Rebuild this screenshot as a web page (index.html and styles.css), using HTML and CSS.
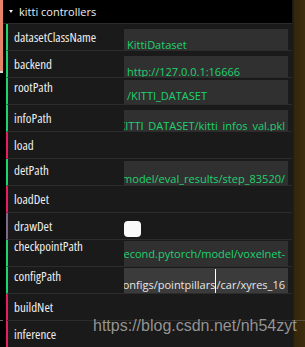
FILE: index.html
```html
<!DOCTYPE html>
<html lang="en">

<head>
    <meta charset="UTF-8">
    <title>kitti controllers</title>
    <link rel="stylesheet" href="styles.css">
</head>

<body>
    <div class="page">
        <div class="gutter-left"></div>
        <div class="gui">
            <div class="title"><span class="arrow"></span>kitti controllers</div>
            <ul class="rows">
                <li class="row string">
                    <span class="label">datasetClassName</span>
                    <div class="field">KittiDataset</div>
                </li>
                <li class="row string">
                    <span class="label">backend</span>
                    <div class="field">http://127.0.0.1:16666</div>
                </li>
                <li class="row string lift-m">
                    <span class="label">rootPath</span>
                    <div class="field">/KITTI_DATASET</div>
                </li>
                <li class="row string">
                    <span class="label">infoPath</span>
                    <div class="field scrolled">/KITTI_DATASET/kitti_infos_val.pkl</div>
                </li>
                <li class="row function">
                    <span class="label">load</span>
                </li>
                <li class="row string lift-s">
                    <span class="label">detPath</span>
                    <div class="field scrolled">/second.pytorch/model/eval_results/step_83520/</div>
                </li>
                <li class="row function">
                    <span class="label">loadDet</span>
                </li>
                <li class="row boolean">
                    <span class="label">drawDet</span>
                    <span class="checkbox"></span>
                </li>
                <li class="row string lift-l">
                    <span class="label">checkpointPath</span>
                    <div class="field scrolled">/second.pytorch/model/voxelnet-</div>
                </li>
                <li class="row string lift-m focused">
                    <span class="label">configPath</span>
                    <div class="field scrolled">/second/configs/pointpillars<span class="caret"></span>/car/xyres_16</div>
                </li>
                <li class="row function">
                    <span class="label">buildNet</span>
                </li>
                <li class="row function">
                    <span class="label">inference</span>
                </li>
            </ul>
        </div>
        <div class="gutter-right"></div>
    </div>
    <div class="watermark">https://blog.csdn.net/nh54zyt</div>
</body></html>
```

FILE: styles.css
```css
* {
    box-sizing: border-box;
    padding: 0;
    margin: 0;
}

body {
    background: #000;
    font-family: "Open Sans", "Noto Sans", sans-serif;
    overflow: hidden;
}

.page {
    display: flex;
    height: 347px;
}

.gutter-left {
    width: 3px;
    background:
        linear-gradient(transparent 320px, #6a6a6a 320px, #6a6a6a 321px, transparent 321px),
        linear-gradient(#e8836a 71px, #d8d8d8 71px, #d8d8d8 73px, #000 73px);
}

.gui {
    width: 289px;
    background: #000;
}

.gutter-right {
    flex: 1;
    background:
        linear-gradient(transparent 320px, #5a5040 320px, #5a5040 321px, transparent 321px),
        linear-gradient(90deg, #1c1c1c 0, #1c1c1c 2px, #35260a 2px, #3d2c0e 100%);
}

.title {
    height: 24px;
    border-bottom: 1px solid #2c2c2c;
    color: #eee;
    font-size: 11px;
    line-height: 22px;
    padding-left: 6px;
    display: flex;
    align-items: center;
}

.arrow {
    width: 0;
    height: 0;
    border-left: 2.5px solid transparent;
    border-right: 2.5px solid transparent;
    border-top: 3px solid #eee;
    margin-right: 6px;
}

.rows {
    list-style: none;
    margin-left: 3px;
}

.row {
    height: 27px;
    display: flex;
    background: #1a1a1a;
    border-bottom: 1px solid #2c2c2c;
    border-left: 2px solid #1ed36f;
    overflow: hidden;
}

.row.function {
    border-left-color: #e61d5f;
}

.row.boolean {
    border-left-color: #806787;
}

.label {
    width: 116px;
    flex-shrink: 0;
    padding-left: 6px;
    padding-top: 4px;
    color: #eee;
    font-size: 13px;
    font-stretch: 84%;
    line-height: 19px;
    white-space: nowrap;
}

.field {
    width: 164px;
    height: 22px;
    margin-top: 5px;
    padding: 8px 0 0 3px;
    background: #303030;
    color: #1ed36f;
    font-size: 11px;
    font-stretch: 95%;
    line-height: 16px;
    white-space: nowrap;
    overflow: hidden;
}

.field.scrolled {
    display: flex;
    justify-content: flex-end;
    padding-right: 3px;
}

.lift-s .label {
    padding-top: 1.5px;
}

.lift-s .field {
    margin-top: 2px;
    height: 24px;
    padding-top: 10px;
}

.lift-m .label {
    padding-top: 0;
}

.lift-m .field {
    margin-top: 2px;
    height: 24px;
    padding-top: 8px;
}

.lift-l .label {
    margin-top: -3px;
    padding-top: 0;
}

.lift-l .field {
    margin-top: 1px;
    height: 26px;
    padding-top: 5px;
}

.focused .field {
    margin-top: 1px;
    height: 25px;
    padding-top: 9px;
    background: #3b3b3b;
    color: #e6e6e6;
}

.caret {
    flex-shrink: 0;
    width: 1px;
    height: 24px;
    margin-top: -8px;
    background: #fff;
}

.checkbox {
    width: 17px;
    height: 16px;
    margin-top: 8px;
    background: #fafafa;
    border-radius: 4px;
}

.watermark {
    position: absolute;
    left: 93px;
    top: 317px;
    font-family: "Liberation Sans", Arial, sans-serif;
    font-size: 16px;
    color: rgba(190, 190, 190, 0.75);
}
```
